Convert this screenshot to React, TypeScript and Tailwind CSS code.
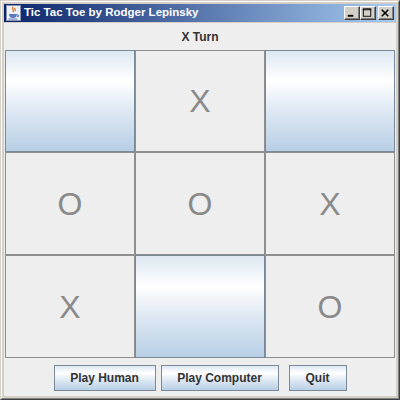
import React from "react";

const cells = ["", "X", "", "O", "O", "X", "X", "", "O"];

function JavaIcon() {
  return (
    <svg width="16" height="16" viewBox="0 0 16 16" className="shrink-0">
      <rect x="1.5" y="0.5" width="14" height="15" fill="#eef0f6" stroke="#8a93b0" />
      <path d="M8 2 C6 4 10 5 8 7 M10 3 C9 4 11 5 10 6" stroke="#e0701a" strokeWidth="1.3" fill="none" />
      <path d="M4 9 H12 C12 12 10 13 8 13 C6 13 4 12 4 9 Z" fill="#5a7ac0" />
      <path d="M12 10 H13.5 V11.5 H12" stroke="#5a7ac0" fill="none" />
      <path d="M3.5 14 H12.5" stroke="#5a7ac0" />
    </svg>
  );
}

function CapButton({ kind }: { kind: "min" | "max" | "close" }) {
  return (
    <div className="w-[16px] h-[14px] bg-[#d4d0c8] border-t border-l border-t-white border-l-white border-b border-r border-b-[#404040] border-r-[#404040]">
      <div className="w-full h-full border-b border-r border-b-[#808080] border-r-[#808080] flex items-center justify-center">
        <svg width="14" height="12" viewBox="0 0 14 12">
          {kind === "min" && <rect x="3" y="8" width="6" height="2" fill="#000" />}
          {kind === "max" && (
            <g fill="none" stroke="#000">
              <rect x="2.5" y="1.5" width="8" height="8" />
              <line x1="2" y1="2.5" x2="11" y2="2.5" />
            </g>
          )}
          {kind === "close" && (
            <g stroke="#000" strokeWidth="1.6">
              <line x1="3" y1="2.5" x2="10" y2="9.5" />
              <line x1="10" y1="2.5" x2="3" y2="9.5" />
            </g>
          )}
        </svg>
      </div>
    </div>
  );
}

const oceanGrad =
  "bg-[linear-gradient(180deg,#dde8f3_0%,#ffffff_30%,#dde8f3_60%,#b8cfe5_100%)]";

export default function App() {
  return (
    <div
      className="w-[400px] h-[400px] border border-t-[#d4d0c8] border-l-[#d4d0c8] border-b-[#404040] border-r-[#404040]"
      style={{ fontFamily: '"Liberation Sans", Arial, sans-serif' }}
    >
      <div className="w-full h-full border border-t-white border-l-white border-b-[#808080] border-r-[#808080] bg-[#d4d0c8] p-[2px] flex flex-col">
        <div className="h-[18px] flex items-center bg-[linear-gradient(90deg,#0a246a,#a6caf0)]">
          <div className="ml-[1px]">
            <JavaIcon />
          </div>
          <span className="ml-[3px] text-white font-bold text-[11.5px] leading-none whitespace-nowrap">
            Tic Tac Toe by Rodger Lepinsky
          </span>
          <div className="ml-auto mr-[2px] flex items-center">
            <CapButton kind="min" />
            <CapButton kind="max" />
            <div className="w-[2px]" />
            <CapButton kind="close" />
          </div>
        </div>
        <div className="mt-px flex-1 bg-[#eeeeee] flex flex-col">
          <div className="h-[27px] flex items-center justify-center text-[12px] font-bold text-[#333333]">
            X Turn
          </div>
          <div className="px-px">
            <div className="grid grid-cols-3 grid-rows-[102px_103px_103px]">
              {cells.map((c, i) =>
                c === "" ? (
                  <div key={i} className={`border border-[#7a8a99] ${oceanGrad}`} />
                ) : (
                  <div
                    key={i}
                    className="border border-[#8e8e8e] bg-[#eeeeee] flex items-center justify-center text-[32px] text-[#8a8a8a] leading-none"
                  >
                    {c}
                  </div>
                )
              )}
            </div>
          </div>
          <div className="flex-1 flex justify-center pt-[7px]">
            <button className={`w-[102px] h-[26px] border border-[#7a8a99] ${oceanGrad} text-[12px] font-bold text-[#333333]`}>
              Play Human
            </button>
            <button className={`ml-[5px] w-[118px] h-[26px] border border-[#7a8a99] ${oceanGrad} text-[12px] font-bold text-[#333333]`}>
              Play Computer
            </button>
            <button className={`ml-[10px] w-[58px] h-[26px] border border-[#7a8a99] ${oceanGrad} text-[12px] font-bold text-[#333333]`}>
              Quit
            </button>
          </div>
        </div>
      </div>
    </div>
  );
}
